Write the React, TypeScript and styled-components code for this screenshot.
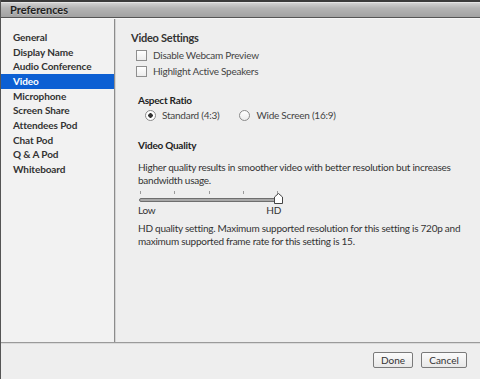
import React, { useState } from 'react';
import styled, { createGlobalStyle } from 'styled-components';

const GlobalStyle = createGlobalStyle`
    html, body {
        margin: 0;
        padding: 0;
        background: #eeeeee;
    }
    body {
        font-family: "Lato", "Open Sans", sans-serif;
        color: #333333;
    }
`;

const NAV_ITEMS = [
    'General',
    'Display Name',
    'Audio Conference',
    'Video',
    'Microphone',
    'Screen Share',
    'Attendees Pod',
    'Chat Pod',
    'Q & A Pod',
    'Whiteboard',
];

const TICKS = [0, 25, 50, 75, 100];

const App = () => {
    const [selected, setSelected] = useState('Video');
    const [aspect, setAspect] = useState('standard');

    return (
        <Window>
            <GlobalStyle/>
            <TitleBar>Preferences</TitleBar>
            <Body>
                <Sidebar>
                    {NAV_ITEMS.map(item => (
                        <NavItem key={item}
                            $active={item === selected}
                            onClick={() => setSelected(item)}
                        >
                            {item}
                        </NavItem>
                    ))}
                </Sidebar>
                <Panel>
                    <PanelTitle>Video Settings</PanelTitle>
                    <CheckRow>
                        <CheckBox/>
                        Disable Webcam Preview
                    </CheckRow>
                    <CheckRow>
                        <CheckBox/>
                        Highlight Active Speakers
                    </CheckRow>

                    <Section>
                        <SectionTitle>Aspect Ratio</SectionTitle>
                        <RadioGroup>
                            <RadioRow onClick={() => setAspect('standard')}>
                                <Radio $checked={aspect === 'standard'}/>
                                Standard (4:3)
                            </RadioRow>
                            <RadioRow onClick={() => setAspect('wide')}>
                                <Radio $checked={aspect === 'wide'}/>
                                Wide Screen (16:9)
                            </RadioRow>
                        </RadioGroup>
                    </Section>

                    <Section $gap={16}>
                        <SectionTitle>Video Quality</SectionTitle>
                        <Paragraph $gap={9}>
                            Higher quality results in smoother video with better resolution but increases bandwidth usage.
                        </Paragraph>
                        <Slider>
                            <Ticks>
                                {TICKS.map(t => <Tick key={t}/>)}
                            </Ticks>
                            <Track>
                                <Thumb viewBox="0 0 9 11">
                                    <path d="M0.5 4 L4.5 0.5 L8.5 4 L8.5 10.5 L0.5 10.5 Z"
                                        fill="#ffffff" stroke="#444444" strokeWidth="1"/>
                                </Thumb>
                            </Track>
                            <SliderLabels>
                                <span>Low</span>
                                <span>HD</span>
                            </SliderLabels>
                        </Slider>
                        <Paragraph $gap={6}>
                            HD quality setting. Maximum supported resolution for this setting is 720p and maximum supported frame rate for this setting is 15.
                        </Paragraph>
                    </Section>
                </Panel>
            </Body>
            <Footer>
                <Button>Done</Button>
                <Button $wide>Cancel</Button>
            </Footer>
        </Window>
    );
};

const Window = styled.div`
    width: 480px;
    height: 379px;
    display: flex;
    flex-direction: column;
    overflow: hidden;
    border-left: 1px solid #555555;
    box-sizing: border-box;
    background: #eeeeee;
`;

const TitleBar = styled.div`
    height: 15px;
    flex: none;
    border-top: 2px solid #3a3a3a;
    border-bottom: 1px solid #555555;
    background: linear-gradient(#d6d6d6, #b4b4b4 40%, #a2a2a2);
    box-shadow: inset 0 1px 0 #e4e4e4;
    padding-left: 9px;
    font-size: 11px;
    font-weight: 700;
    line-height: 15px;
    color: #1e1e1e;
    text-shadow: 0 1px 0 rgba(255, 255, 255, 0.35);
`;

const Body = styled.div`
    flex: 1;
    display: flex;
    min-height: 0;
    border-top: 1px solid #f6f6f6;
`;

const Sidebar = styled.div`
    width: 114px;
    flex: none;
    background: #f2f2f2;
    border-right: 1px solid #8c8c8c;
    box-shadow: 1px 0 0 #d4d4d4;
    padding-top: 11px;
    box-sizing: border-box;
`;

const NavItem = styled.div<{ $active?: boolean }>`
    height: 14.67px;
    line-height: 14.67px;
    padding-left: 12px;
    font-size: 10px;
    font-weight: 700;
    letter-spacing: -0.1px;
    color: ${p => p.$active ? '#ffffff' : '#333333'};
    background: ${p => p.$active ? '#0c5fd3' : 'transparent'};
    cursor: default;
`;

const Panel = styled.div`
    flex: 1;
    padding: 12px 0 0 16px;
    font-size: 10px;
    letter-spacing: -0.25px;
    color: #333333;
`;

const PanelTitle = styled.div`
    font-size: 11px;
    font-weight: 700;
    line-height: 14px;
    margin-bottom: 2px;
`;

const CheckRow = styled.label`
    display: flex;
    align-items: center;
    gap: 6px;
    height: 16px;
    padding-left: 5px;
    color: #444444;
`;

const CheckBox = styled.span`
    width: 9px;
    height: 9px;
    border: 1px solid #8e8e8e;
    background: linear-gradient(#ffffff, #ececec);
    flex: none;
`;

const Section = styled.div<{ $gap?: number }>`
    margin-top: ${p => p.$gap ?? 14}px;
    padding-left: 7px;
    padding-right: 8px;
`;

const SectionTitle = styled.div`
    font-size: 10px;
    font-weight: 700;
    line-height: 14px;
    color: #222222;
`;

const RadioGroup = styled.div`
    display: flex;
    gap: 20px;
    padding-left: 7px;
    margin-top: 1px;
`;

const RadioRow = styled.label`
    display: flex;
    align-items: center;
    gap: 6px;
    height: 14px;
    color: #444444;
`;

const Radio = styled.span<{ $checked?: boolean }>`
    width: 9px;
    height: 9px;
    border-radius: 50%;
    border: 1px solid #8a8a8a;
    background: ${p => p.$checked
        ? 'radial-gradient(circle, #333333 0 2px, #ffffff 2.5px)'
        : 'linear-gradient(#ffffff, #ececec)'};
    flex: none;
`;

const Paragraph = styled.p<{ $gap?: number }>`
    margin: ${p => p.$gap ?? 10}px 0 0;
    line-height: 13px;
    color: #333333;
`;

const Slider = styled.div`
    width: 143px;
    margin-top: 4px;
`;

const Ticks = styled.div`
    display: flex;
    justify-content: space-between;
    padding: 0 3px 0 2px;
    height: 4px;
`;

const Tick = styled.span`
    width: 1px;
    height: 3px;
    background: #9a9a9a;
`;

const Track = styled.div`
    position: relative;
    margin: 3px 2px 0 1px;
    height: 2px;
    border: 1px solid #6e6e6e;
    border-radius: 2px;
    background: #a8a8a8;
`;

const Thumb = styled.svg`
    position: absolute;
    right: -5px;
    top: -6px;
    width: 9px;
    height: 11px;
`;

const SliderLabels = styled.div`
    display: flex;
    justify-content: space-between;
    margin-top: 2px;
    line-height: 12px;
    color: #333333;
`;

const Footer = styled.div`
    height: 37px;
    flex: none;
    display: flex;
    justify-content: flex-end;
    align-items: flex-start;
    gap: 8px;
    padding: 9px 13px 0 0;
    box-sizing: border-box;
    border-top: 1px solid #9a9a9a;
    box-shadow: inset 0 1px 0 #dadada;
    background: #eeeeee;
`;

const Button = styled.button<{ $wide?: boolean }>`
    width: ${p => p.$wide ? '46px' : '40px'};
    height: 16px;
    padding: 0;
    border: 1px solid #7a7a7a;
    border-radius: 2px;
    background: linear-gradient(#fbfbfb, #e8e8e8);
    font-family: inherit;
    font-size: 10px;
    color: #333333;
    line-height: 14px;
`;

export default App;
